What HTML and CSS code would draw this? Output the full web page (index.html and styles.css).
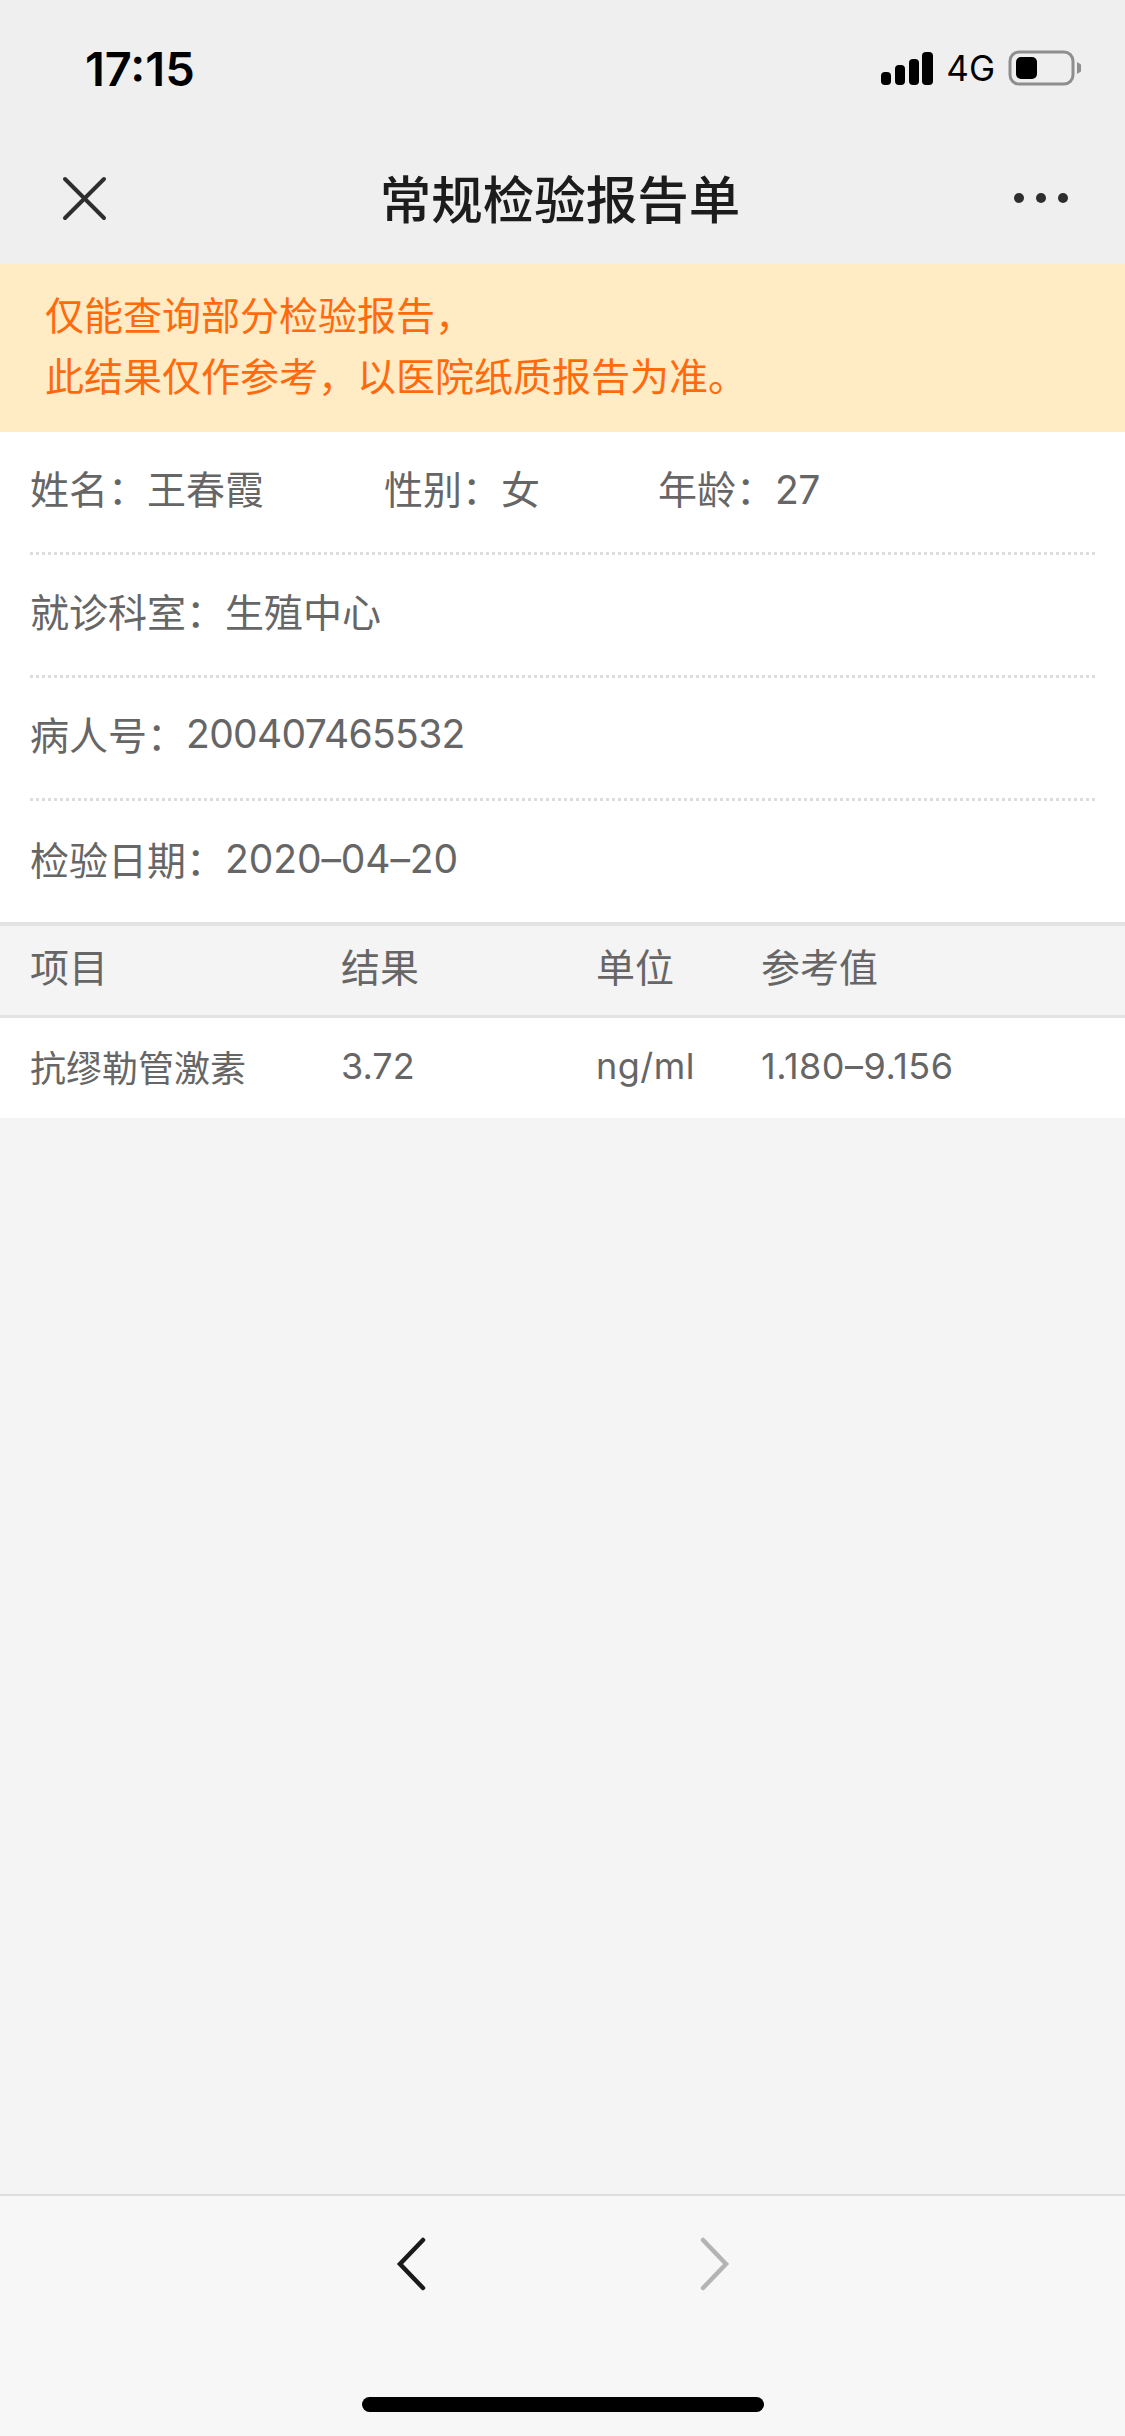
FILE: index.html
```html
<!DOCTYPE html>
<html lang="zh-CN">

<head>
    <meta charset="UTF-8">
    <title>常规检验报告单</title>
    <link rel="stylesheet" href="styles.css">
</head>

<body>
    <div class="page">
        <div class="top">
            <div class="status">
                <span class="time">17:15</span>
                <div class="status-right">
                    <svg class="signal" width="52" height="33" viewBox="0 0 52 33">
                        <rect x="0" y="20" width="10" height="13" rx="4" />
                        <rect x="14" y="13" width="10" height="20" rx="4" />
                        <rect x="28" y="7" width="10" height="26" rx="4" />
                        <rect x="41" y="0" width="11" height="33" rx="4" />
                    </svg>
                    <span class="net">4G</span>
                    <svg class="battery" width="74" height="36" viewBox="0 0 74 36">
                        <rect x="2" y="2" width="63" height="32" rx="9" fill="none" stroke="#8e8e8e" stroke-width="3" />
                        <rect x="8" y="7" width="21" height="22" rx="5" fill="#000" />
                        <path d="M69 12 L73 14.5 V21.5 L69 24 Z" fill="#8e8e8e" />
                    </svg>
                </div>
            </div>
            <div class="nav">
                <svg class="nav-close" width="47" height="47" viewBox="0 0 47 47">
                    <path d="M4 4 L43 43 M43 4 L4 43" fill="none" stroke="#2e2e2e" stroke-width="4" stroke-linecap="round" />
                </svg>
                <div class="nav-title">常规检验报告单</div>
                <svg class="nav-more" width="54" height="12" viewBox="0 0 54 12">
                    <circle cx="5" cy="6" r="5" />
                    <circle cx="27" cy="6" r="5" />
                    <circle cx="49" cy="6" r="5" />
                </svg>
            </div>
        </div>

        <div class="notice">
            <p>仅能查询部分检验报告，</p>
            <p>此结果仅作参考，以医院纸质报告为准。</p>
        </div>

        <div class="info">
            <div class="info-row">
                <span class="info-name">姓名：王春霞</span>
                <span class="info-sex">性别：女</span>
                <span>年龄：<span class="num">27</span></span>
            </div>
            <div class="info-row">就诊科室：生殖中心</div>
            <div class="info-row">病人号：<span class="num">200407465532</span></div>
            <div class="info-row">检验日期：<span class="date">2020–04–20</span></div>
        </div>

        <div class="result">
            <div class="result-head">
                <span>项目</span>
                <span>结果</span>
                <span>单位</span>
                <span>参考值</span>
            </div>
            <div class="result-row">
                <span>抗缪勒管激素</span>
                <span>3.72</span>
                <span class="val">ng/ml</span>
                <span class="val">1.180–9.156</span>
            </div>
        </div>

        <div class="bottom">
            <div class="bottom-btns">
                <svg width="32" height="54" viewBox="0 0 32 54">
                    <path d="M28 3 L5 27 L28 51" fill="none" stroke="#1a1a1a" stroke-width="4.5" stroke-linecap="round" />
                </svg>
                <svg width="32" height="54" viewBox="0 0 32 54">
                    <path d="M4 3 L27 27 L4 51" fill="none" stroke="#b4b4b4" stroke-width="4.5" stroke-linecap="round" />
                </svg>
            </div>
            <div class="home-bar"></div>
        </div>
    </div>
</body>

</html>
```

FILE: styles.css
```css
* {
    padding: 0;
    margin: 0;
    box-sizing: border-box;
}

html,
body {
    width: 1125px;
    height: 2436px;
    overflow: hidden;
}

body {
    font-family: "Inter", "Noto Sans CJK SC", sans-serif;
    background-color: #f4f4f4;
}

.page {
    height: 2436px;
    display: flex;
    flex-direction: column;
}

.top {
    height: 264px;
    background-color: #efefef;
}

.status {
    height: 132px;
    padding: 4px 43px 0 85px;
    display: flex;
    align-items: center;
    justify-content: space-between;
}

.time {
    font-size: 47px;
    font-weight: 600;
    color: #000;
}

.status-right {
    display: flex;
    align-items: center;
}

.signal {
    margin-right: 13px;
}

.net {
    font-size: 35px;
    color: #000;
    margin-right: 13px;
}

.nav {
    height: 132px;
    padding: 0 57px 0 61px;
    display: flex;
    align-items: center;
    justify-content: space-between;
}

.nav-title {
    font-size: 51.5px;
    font-weight: 500;
    color: #1c1c1c;
    padding-bottom: 3px;
    margin-left: -2px;
}

.nav-more {
    fill: #2e2e2e;
}

.notice {
    height: 168px;
    padding: 22px 45px 0;
    background-color: #ffebc4;
    color: #ff6a0d;
    font-size: 39px;
    line-height: 60.5px;
}

.info {
    padding: 0 30px;
    background-color: #fff;
    color: #666;
    font-size: 39px;
}

.info-row {
    height: 123px;
    padding-bottom: 10px;
    display: flex;
    align-items: center;
    border-bottom: 3px dotted #ddd;
}

.info-row:last-child {
    height: 121px;
    padding-bottom: 7px;
    border-bottom: 0;
}

.info-name {
    width: 354px;
}

.info-sex {
    width: 274px;
}

.num {
    letter-spacing: -0.65px;
}

.date {
    letter-spacing: -0.1px;
}

.result-head,
.result-row {
    display: grid;
    grid-template-columns: 311px 255px 165px 1fr;
    padding: 0 30px;
    align-items: center;
    color: #666;
}

.result-head {
    height: 96px;
    padding-bottom: 11px;
    font-size: 39px;
    background-color: #f4f4f4;
    border-top: 4px solid #e3e3e3;
    border-bottom: 3px solid #e3e3e3;
}

.result-row {
    height: 100px;
    padding-bottom: 4px;
    font-size: 36px;
    background-color: #fff;
}

.val {
    letter-spacing: 0.5px;
}

.bottom {
    margin-top: auto;
    height: 242px;
    background-color: #f7f7f7;
    border-top: 2px solid #dedede;
    position: relative;
}

.bottom-btns {
    padding: 41px 0 0 395px;
    display: flex;
    gap: 272px;
}

.home-bar {
    position: absolute;
    left: 362px;
    bottom: 24px;
    width: 402px;
    height: 15px;
    border-radius: 8px;
    background-color: #000;
}
```
